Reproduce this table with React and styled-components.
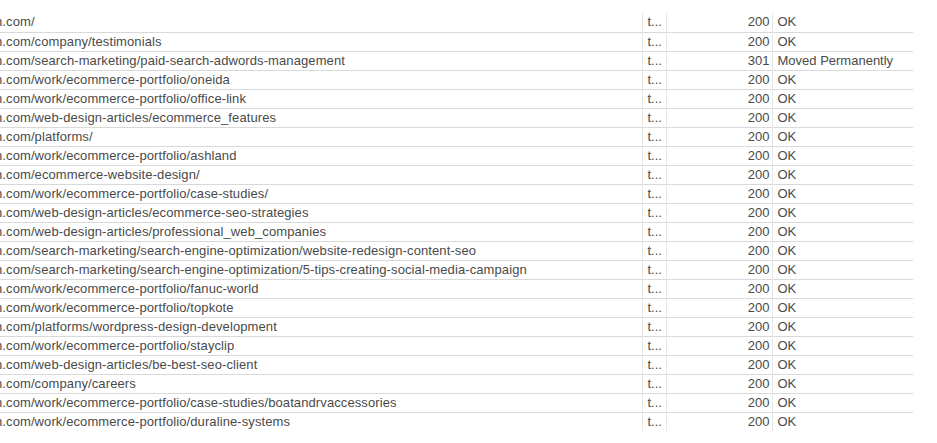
import React from "react";
import styled, { createGlobalStyle } from "styled-components";

const Global = createGlobalStyle`
  html, body { margin: 0; padding: 0; background: #ffffff; overflow: hidden; }
  body { font-family: "Liberation Sans", Arial, sans-serif; }
`;

const Viewport = styled.div`
  width: 937px;
  height: 443px;
  overflow: hidden;
  padding-top: 13px;
  box-sizing: border-box;
`;

const Grid = styled.table`
  border-collapse: collapse;
  table-layout: fixed;
  margin-left: -10px;
  width: 923px;
  font-size: 13px;
  color: #4a4a4a;
`;

const Col = styled.col`
  width: ${(p) => p.$w}px;
`;

const Row = styled.tr`
  height: 19px;
  & + & td { border-top: 1px solid #d9d9d9; }
`;

const Cell = styled.td`
  padding: 0 5px;
  height: 18px;
  line-height: 18px;
  white-space: nowrap;
  overflow: hidden;
  text-align: ${(p) => (p.$align === "right" ? "right" : "left")};
  border-left: ${(p) => (p.$divider ? "1px solid #e6e6e6" : "none")};
  padding-right: ${(p) => (p.$align === "right" ? "2px" : "5px")};
`;

const UrlCell = styled(Cell)`
  letter-spacing: 0.1px;
`;

const rows = [
  ["n.com/", 200, "OK"],
  ["n.com/company/testimonials", 200, "OK"],
  ["n.com/search-marketing/paid-search-adwords-management", 301, "Moved Permanently"],
  ["n.com/work/ecommerce-portfolio/oneida", 200, "OK"],
  ["n.com/work/ecommerce-portfolio/office-link", 200, "OK"],
  ["n.com/web-design-articles/ecommerce_features", 200, "OK"],
  ["n.com/platforms/", 200, "OK"],
  ["n.com/work/ecommerce-portfolio/ashland", 200, "OK"],
  ["n.com/ecommerce-website-design/", 200, "OK"],
  ["n.com/work/ecommerce-portfolio/case-studies/", 200, "OK"],
  ["n.com/web-design-articles/ecommerce-seo-strategies", 200, "OK"],
  ["n.com/web-design-articles/professional_web_companies", 200, "OK"],
  ["n.com/search-marketing/search-engine-optimization/website-redesign-content-seo", 200, "OK"],
  ["n.com/search-marketing/search-engine-optimization/5-tips-creating-social-media-campaign", 200, "OK"],
  ["n.com/work/ecommerce-portfolio/fanuc-world", 200, "OK"],
  ["n.com/work/ecommerce-portfolio/topkote", 200, "OK"],
  ["n.com/platforms/wordpress-design-development", 200, "OK"],
  ["n.com/work/ecommerce-portfolio/stayclip", 200, "OK"],
  ["n.com/web-design-articles/be-best-seo-client", 200, "OK"],
  ["n.com/company/careers", 200, "OK"],
  ["n.com/work/ecommerce-portfolio/case-studies/boatandrvaccessories", 200, "OK"],
  ["n.com/work/ecommerce-portfolio/duraline-systems", 200, "OK"],
];

export default function App() {
  return (
    <Viewport>
      <Global />
      <Grid>
        <colgroup>
          <Col $w={652} />
          <Col $w={24} />
          <Col $w={106} />
          <Col $w={141} />
        </colgroup>
        <tbody>
          {rows.map(([url, code, status], i) => (
            <Row key={i}>
              <UrlCell>{url}</UrlCell>
              <Cell $divider>t...</Cell>
              <Cell $divider $align="right">{code}</Cell>
              <Cell $divider>{status}</Cell>
            </Row>
          ))}
        </tbody>
      </Grid>
    </Viewport>
  );
}
